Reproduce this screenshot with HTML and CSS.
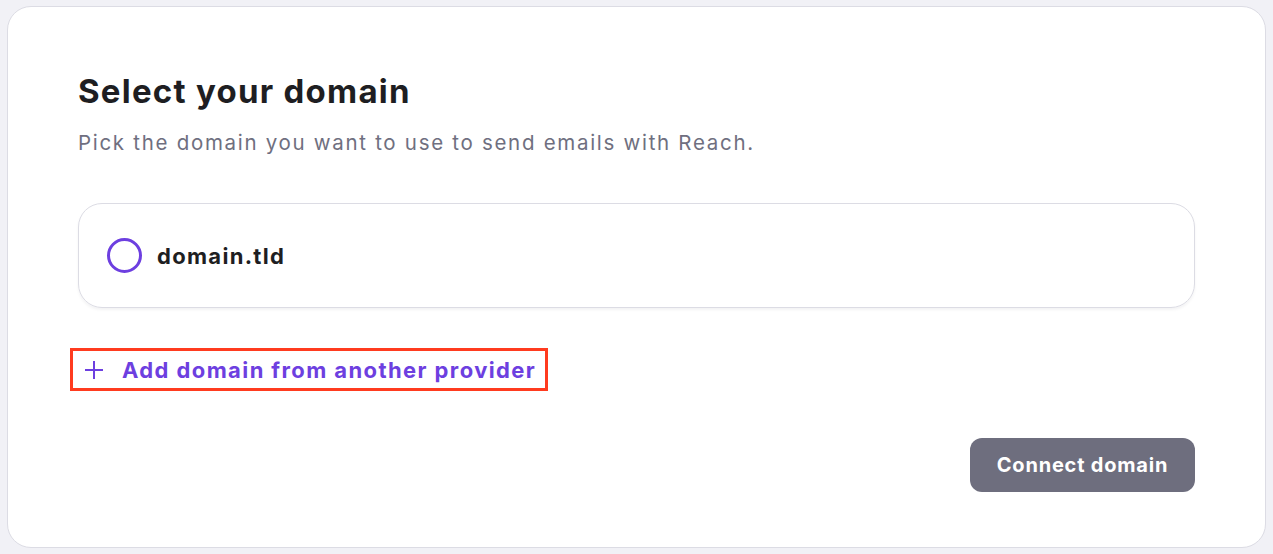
FILE: index.html
```html
<!DOCTYPE html>
<html lang="en">
<head>
    <meta charset="UTF-8">
    <meta name="viewport" content="width=device-width, initial-scale=1.0">
    <title>Select your domain</title>
    <link rel="stylesheet" href="styles.css">
</head>
<body>
    <div class="card">
        <h1 class="title">Select your domain</h1>
        <p class="subtitle">Pick the domain you want to use to send emails with Reach.</p>

        <label class="option">
            <input type="radio" name="domain" class="radio-input">
            <span class="radio"></span>
            <span class="option-name">domain.tld</span>
        </label>

        <div class="add-row">
            <a href="#" class="add-link">
                <svg class="plus" width="20" height="20" viewBox="0 0 20 20">
                    <path d="M10 1v18M1 10h18" stroke="currentColor" stroke-width="2" fill="none"/>
                </svg>
                <span>Add domain from another provider</span>
            </a>
        </div>

        <div class="actions">
            <button class="connect">Connect domain</button>
        </div>
    </div>
</body>
</html>
```

FILE: styles.css
```css
* {
    margin: 0;
    padding: 0;
    box-sizing: border-box;
}

body {
    font-family: Inter, "Noto Sans", sans-serif;
    background-color: #f1f1f6;
    padding: 6px 7px;
}

.card {
    width: 1259px;
    height: 542px;
    background-color: #ffffff;
    border: 1px solid #dcdce4;
    border-radius: 24px;
    padding: 64px 70px 0 70px;
}

.title {
    font-size: 33px;
    line-height: 40px;
    font-weight: 700;
    color: #1e1e22;
    letter-spacing: 1.25px;
}

.subtitle {
    margin-top: 18px;
    font-size: 20.5px;
    line-height: 28px;
    color: #6f6f80;
    letter-spacing: 1.7px;
}

.option {
    margin-top: 46px;
    height: 105px;
    display: flex;
    align-items: center;
    padding-left: 28px;
    border: 1px solid #dcdce4;
    border-radius: 24px;
    box-shadow: 0 2px 3px rgba(20, 20, 40, 0.05);
    cursor: pointer;
}

.radio-input {
    display: none;
}

.radio {
    width: 35px;
    height: 35px;
    border: 3px solid #6d3fe0;
    border-radius: 50%;
}

.option-name {
    margin-left: 15px;
    font-size: 22px;
    font-weight: 700;
    color: #1e1e22;
    letter-spacing: 1.3px;
}

.add-row {
    margin-top: 40px;
    display: flex;
}

.add-link {
    display: flex;
    align-items: center;
    height: 43px;
    padding: 0 9px 0 11px;
    border: 3px solid #ff3b1f;
    color: #6d3fe0;
    text-decoration: none;
    font-size: 22px;
    font-weight: 700;
    letter-spacing: 1.4px;
    margin-left: -8px;
}

.plus {
    width: 20px;
    height: 20px;
    margin-right: 18px;
}

.actions {
    margin-top: 47px;
    display: flex;
    justify-content: flex-end;
}

.connect {
    width: 225px;
    height: 54px;
    border: none;
    border-radius: 12px;
    background-color: #6e6e7e;
    color: #ffffff;
    font-family: Inter, "Noto Sans", sans-serif;
    font-size: 20px;
    font-weight: 700;
    letter-spacing: 0.8px;
    cursor: pointer;
}
```
